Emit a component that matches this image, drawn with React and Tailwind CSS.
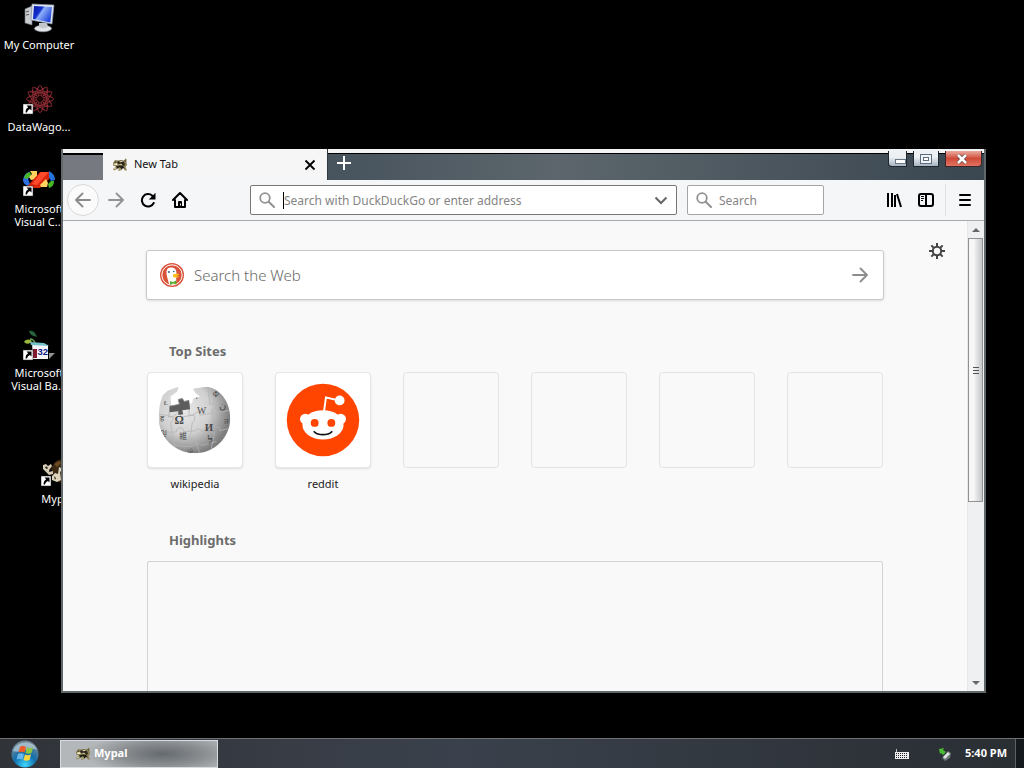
import React from "react";

function ShortcutArrow() {
  return (
    <g>
      <rect x="0" y="20" width="10" height="10" fill="#fff" stroke="#222" strokeWidth=".5" />
      <path d="M3.500 21.500h5v5l-1.600-1.600c-1.800.8-2.600 1.800-2.900 3.600H2.600c-.1-2.600.8-4.100 2.600-5.300z" fill="#000" />
    </g>
  );
}

function ComputerIcon() {
  return (
    <svg viewBox="0 0 32 32" className="size-8" aria-hidden="true">
      <defs>
        <linearGradient id="screen" x1="0" y1="0" x2="1" y2=".6">
          <stop offset="0" stopColor="#0719a5" />
          <stop offset=".4" stopColor="#1230cf" />
          <stop offset=".5" stopColor="#8fb0fa" />
          <stop offset="1" stopColor="#2347dc" />
        </linearGradient>
      </defs>
      <path d="M2 7l7-3v19l-7-2z" fill="#c9cccf" stroke="#72767c" strokeWidth=".6" />
      <path d="M3 10l3-1M3 13l3-.5" stroke="#555" />
      <path d="M16 22l8 1v5h-8z" fill="#aab0b8" />
      <ellipse cx="20" cy="26.500" rx="8.500" ry="3.300" fill="#e1e4e8" stroke="#8e949c" strokeWidth=".6" />
      <path d="M16 21h8l1 4c-3 1.500-7 1.500-9 0z" fill="#c3c7cc" />
      <path d="M9 2l22 1-2 19-21-4z" fill="#dfe5ee" stroke="#8291a8" strokeWidth=".7" />
      <path d="M11 4l18 1-1.700 15.500L10 17z" fill="url(#screen)" />
    </svg>
  );
}

function DataWagonIcon() {
  const angles = [0, 30, 60, 90, 120, 150, 180, 210, 240, 270, 300, 330];
  return (
    <svg viewBox="0 0 32 32" className="size-8" aria-hidden="true">
      <g fill="none" stroke="#a9353d" strokeWidth=".8">
        {angles.map((a) => (
          <g key={a} transform={`rotate(${a} 17 15)`}>
            <path d="M17 12l-4-5 4-6 4 6z" opacity=".75" />
            <path d="M12 3l5 6 5-6M14 10l3-4 3 4" opacity=".6" />
          </g>
        ))}
      </g>
      <circle cx="17" cy="15" r="2.500" fill="#1c0505" />
      <ShortcutArrow />
    </svg>
  );
}

function VisualCIcon() {
  return (
    <svg viewBox="0 0 32 32" className="size-8" aria-hidden="true">
      <path d="M0 14c1-5 3-7 6-8l2 4-3 3 2 5-2 2c-3-1-5-3-5-6z" fill="#2c6fe0" />
      <path d="M1 12c1-4 3-5 6-6l1 3-4 4z" fill="#47b725" />
      <path d="M7 5h7v8l-6 1-2-3 3-3z" fill="#ffd35e" />
      <path d="M2 23L17 6h9l2 2-1 4-10 10H9z" fill="#d9260c" />
      <path d="M9 18L18 6h8l-12 13z" fill="#fc4a2a" />
      <path d="M17 19l6-6 2 4-1 4h-6z" fill="#ffd35e" />
      <path d="M26 5c4 2 6 5 6 9l-4 1-2-4z" fill="#2574de" />
      <path d="M28 15h3c0 4-2 6-5 7l-1-4z" fill="#47b725" />
      <ShortcutArrow />
    </svg>
  );
}

function VisualBasicIcon() {
  return (
    <svg viewBox="0 0 32 32" className="size-8" aria-hidden="true">
      <path d="M6 1c4-1 6 1 8 6-4-1-7-2-8-6z" fill="#26633a" />
      <path d="M1 12c2-3 5-3 8-1-2 3-5 4-8 1z" fill="#9cb93e" />
      <path d="M7 9c3 0 4 1 5 4" stroke="#64a353" strokeWidth="1.500" fill="none" />
      <path d="M9 13l16 2v14H10z" fill="#f5f5fb" />
      <path d="M7 12l14 1 5 3-18-1z" fill="#73c2ca" />
      <path d="M26 23h6l-6 6z" fill="#929292" />
      <path d="M10 19h4v9h-4z" fill="#831830" />
      <text x="14.500" y="25" fontSize="9.500" fontFamily="Liberation Sans, sans-serif" fontWeight="700" fill="#111a87">32</text>
      <ShortcutArrow />
    </svg>
  );
}

function RaccoonFace({ className }) {
  return (
    <svg viewBox="0 0 16 16" className={className} aria-hidden="true">
      <path d="M1 6l2-3 3 .5L9 3l3 .5L13.500 1.500l1 .5v3.500l.5 2.500-1.500 2 1.500 3.500h-2L11 11l-1.500 2-2.500 1-1-1 1.500-2L4 12.500l-2 1L1 12l3-2.500L1 8.500z" fill="#8b8055" />
      <path d="M5 5c2-1.800 5-1.800 7 0l1 3-2 1-1.500-2.500L6 7z" fill="#2b271b" />
      <path d="M3 4.500l1.500.7L2.500 6zM4 9.500l4-1 3 .5 2 2.500-2-.8-1.500 1.800L8 10l-3 1.500zM12.500 3.500l1-.5v2z" fill="#1e1b13" />
      <path d="M1.500 7l3-1L6 7.500 3 8.300zM7 4.500l3-.5 1 .8-3 .4zM7 8l2-.8 1.500.8z" fill="#f6edc8" />
      <path d="M2 11.500l2-1.300.5.8-2 1.500zM7 13l1.500-1.500.5.500-1.300 1.300z" fill="#e0d7ab" />
    </svg>
  );
}

function MypalIcon() {
  return (
    <svg viewBox="0 0 32 32" className="size-8" aria-hidden="true">
      <path d="M10 12l5-7 6-2 7 3 3 8-1 10-8 4-7-4z" fill="#3a2812" />
      <path d="M13 8l5-3 2 2-4 4z" fill="#6b4b20" />
      <path d="M2 9l3-1 2 2 3-2 1 2-2 3-1 3 4-1v3l-4 1-4-4-2-2z" fill="#d6ccb5" />
      <path d="M4 11l2-.5 1 2-2 .3zM8 14l2-2 1 1-2 2z" fill="#211a12" />
      <path d="M11 24v-4l3-3 3 1 1-7 4 2-3 3 1 8-4 2z" fill="#ddd3bc" />
      <path d="M13 20l2 2-1 2z" fill="#2b2013" />
      <ShortcutArrow />
    </svg>
  );
}

function DesktopIcon({ className, icon, children }) {
  return (
    <button type="button" className={`absolute flex w-[78px] flex-col items-center text-white ${className}`}>
      {icon}
      <span className="mt-1 text-[11px] leading-[13px] whitespace-nowrap">{children}</span>
    </button>
  );
}

function SearchIcon({ className }) {
  return (
    <svg viewBox="0 0 16 16" className={className} fill="none" stroke="currentColor" aria-hidden="true">
      <circle cx="6" cy="6" r="4.800" strokeWidth="1.800" />
      <path d="M9.700 9.700l5.300 5.300" strokeWidth="2" strokeLinecap="round" />
    </svg>
  );
}

function Arrow({ className, right }) {
  return (
    <svg viewBox="0 0 16 16" className={className} fill="none" stroke="currentColor" strokeWidth="1.800" strokeLinecap="round" strokeLinejoin="round" aria-hidden="true">
      {right ? <path d="M1 8h14M8.500 1.500L15 8l-6.500 6.500" /> : <path d="M15 8H1M7.500 1.500L1 8l6.500 6.500" />}
    </svg>
  );
}

function TitleBar() {
  return (
    <header className="flex h-[31px] shrink-0 border-t-4 border-[#f1f3f5] bg-[#424e58]">
      <div className="w-10 shrink-0 border-t-2 border-black bg-[#777980]" />
      <div className="-mt-1 flex w-[225px] shrink-0 items-center border-r border-[#303a42] bg-[#f6f6f7] pr-2.5 pl-[9px]">
        <RaccoonFace className="size-4" />
        <span className="ml-1.5 flex-1 text-[11px] text-[#111]">New Tab</span>
        <button type="button" aria-label="Close tab" className="text-black">
          <svg viewBox="0 0 14 14" className="size-3.5" stroke="currentColor" strokeWidth="1.800"><path d="M2.500 2.500l9 9M11.500 2.500l-9 9" /></svg>
        </button>
      </div>
      <div className="flex min-w-0 flex-1 items-start justify-between border-t border-black bg-linear-to-r from-[#47535d] via-[#5c666c] via-35% to-[#3a4650]">
        <button type="button" aria-label="New tab" className="ml-2 mt-px text-white">
          <svg viewBox="0 0 16 16" className="size-4" stroke="currentColor" strokeWidth="2"><path d="M8 1v14M1 8h14" /></svg>
        </button>
        <div className="-mt-[3px] mr-0.5 flex gap-1.5">
          <button type="button" aria-label="Minimize" className="flex h-4 w-[19px] items-end justify-end rounded-bl border border-t-0 border-[#20282f] bg-linear-to-b from-[#eef1f3] from-40% to-[#a5b4c2] pb-0.5">
            <span className="h-[5px] w-[11px] border border-[#6b7986] bg-white" />
          </button>
          <button type="button" aria-label="Maximize" className="flex h-4 w-[26px] items-center justify-center border border-t-0 border-[#20282f] bg-linear-to-b from-[#eef1f3] from-40% to-[#a5b4c2]">
            <span className="flex h-2.5 w-3 items-center justify-center border border-[#5e6c7c] bg-[#eff4f8]"><span className="h-1 w-1.5 border border-[#5e6c7c] bg-white" /></span>
          </button>
          <button type="button" aria-label="Close" className="flex h-4 w-[37px] items-center justify-center rounded-br border border-t-0 border-[#38262a] bg-linear-to-b from-[#e9aaa0] via-[#cf4b38] via-50% to-[#e17260] pr-1">
            <svg viewBox="0 0 12 10" className="h-2.5 w-3" fill="none"><path d="M2 1l8 8M10 1L2 9" stroke="#644445" strokeWidth="4" /><path d="M2 1l8 8M10 1L2 9" stroke="#fff" strokeWidth="2.500" /></svg>
          </button>
        </div>
      </div>
    </header>
  );
}

function Toolbar() {
  return (
    <div className="flex h-[41px] shrink-0 items-center border-b border-[#aaa] bg-[#f5f6f7] px-1 text-black">
      <button type="button" aria-label="Back" className="flex size-8 shrink-0 items-center justify-center rounded-full border border-[#d9d9d9] bg-[#fbfbfb] text-[#8a8a8a]"><Arrow className="size-4" /></button>
      <button type="button" aria-label="Forward" className="ml-[9px] text-[#929292]"><Arrow right className="size-4" /></button>
      <button type="button" aria-label="Reload" className="ml-4">
        <svg viewBox="0 0 16 16" className="size-4" fill="none" stroke="currentColor" strokeWidth="2"><path d="M12.300 3.700A6.200 6.200 0 1 0 13.700 11" strokeLinecap="round" /><path d="M15.500.8v6.700H8.800z" fill="currentColor" stroke="none" /></svg>
      </button>
      <button type="button" aria-label="Home" className="ml-4">
        <svg viewBox="0 0 16 16" className="size-4" fill="none" stroke="currentColor" strokeWidth="2" strokeLinejoin="round" strokeLinecap="round"><path d="M1 8l7-7 7 7M3 8v7h10V8" /><path d="M6 15v-5a1 1 0 0 1 1-1h2a1 1 0 0 1 1 1v5z" fill="currentColor" stroke="none" /><path d="M8.500 12v1" stroke="#f5f6f7" strokeWidth="1" /></svg>
      </button>
      <div className="ml-[62px] flex h-[30px] min-w-0 flex-1 items-center rounded-xs border border-[#777] bg-white px-2">
        <SearchIcon className="size-4 shrink-0 text-[#929292]" />
        <span className="ml-2 h-[17px] w-px shrink-0 bg-black" />
        <input aria-label="Search with DuckDuckGo or enter address" placeholder="Search with DuckDuckGo or enter address" className="min-w-0 flex-1 bg-transparent pt-0.5 text-xs text-black outline-none placeholder:text-[#858585]" />
        <button type="button" aria-label="Show history" className="text-[#666]"><svg viewBox="0 0 14 14" className="size-3.5" fill="none" stroke="currentColor" strokeWidth="2"><path d="M1.500 4.500L7 10l5.500-5.500" /></svg></button>
      </div>
      <div className="ml-2.5 flex h-[30px] w-[137px] shrink-0 items-center rounded-xs border border-[#a5a5a5] bg-white px-2">
        <SearchIcon className="size-4 shrink-0 text-[#929292]" />
        <input aria-label="Search" placeholder="Search" className="ml-[7px] min-w-0 flex-1 bg-transparent pt-0.5 text-xs text-black outline-none placeholder:text-[#858585]" />
      </div>
      <button type="button" aria-label="Library" className="ml-[62px]"><svg viewBox="0 0 16 16" className="size-4" fill="none" stroke="currentColor" strokeWidth="2"><path d="M2 1v14M6 1v14M9 3v12" /><path d="M11 2l4 13" /></svg></button>
      <button type="button" aria-label="Sidebars" className="ml-4"><svg viewBox="0 0 16 16" className="size-4" fill="none" stroke="currentColor" strokeWidth="2"><rect x="1" y="2" width="14" height="12" rx="2" /><path d="M8 2v12" /><path d="M3 4.500h3M3 6.500h3M3 8.500h2" strokeWidth="1" /></svg></button>
      <span className="ml-[11px] h-8 w-px bg-[#e0e0e0]" />
      <button type="button" aria-label="Open menu" className="ml-[11px] mr-[7px]"><svg viewBox="0 0 16 16" className="size-4" stroke="currentColor" strokeWidth="2" strokeLinecap="round"><path d="M3 3h10M3 8h10M3 13h10" /></svg></button>
    </div>
  );
}

function DuckIcon() {
  return (
    <svg viewBox="0 0 24 24" className="size-6 shrink-0" aria-hidden="true">
      <circle cx="12" cy="12" r="12" fill="#d95339" />
      <circle cx="12" cy="12" r="10.200" fill="none" stroke="#fff" strokeWidth="1" />
      <path d="M9 21C8 16 6 12 6.500 8c.5-3 3-4 5.500-3.500 3.500.3 4.500 3 4.500 6l-.5 10.500c-2 1-5 1-7 0z" fill="#fff" />
      <path d="M13 11.500c2-1 4-.6 6.500-.3-1 1-3 1.500-4 1.800 1.500.3 3 0 4 .4-1.500 1.300-4 1.600-6.500.6z" fill="#fdbf18" />
      <path d="M10 18l3 1 3-1.500.5 4L13 20.500 10 22z" fill="#5aaf34" />
      <circle cx="9" cy="9" r=".9" fill="#294d78" /><circle cx="13.800" cy="8.500" r=".8" fill="#294d78" />
    </svg>
  );
}

function WikipediaGlobe() {
  return (
    <svg viewBox="0 0 96 96" className="size-full" aria-label="Wikipedia" role="img">
      <defs>
        <radialGradient id="globe" cx=".36" cy=".38" r=".62"><stop offset="0" stopColor="#e9e9e9" /><stop offset=".55" stopColor="#d0d0d0" /><stop offset="1" stopColor="#7d7d7d" /></radialGradient>
        <clipPath id="ball"><path d="M15 23l5-5 11-4-1 5-7 5 0 9 22-2 1-5 7-2-5-4-2-4 13-2c15 1 25 16 25 32 0 20-16 36-36 36S11 66 11 46c0-9 1-16 4-23z" /></clipPath>
      </defs>
      <g clipPath="url(#ball)">
        <rect x="10" y="8" width="76" height="76" fill="url(#globe)" />
        <g fill="none" stroke="#b5b5b5" strokeWidth=".8">
          <path d="M24 24l-3 21c5-2 7 4 2 5l5 30M42 36v8c6-4 8 3 3 7l-1 10c-4 5 1 9 4 6l5 16M61 12l2 20c7-3 8 4 2 6l2 16c-6 2-5 8 1 7l-4 20" />
          <path d="M10 43c9-2 12 3 17 1 2-5 8-3 6 1l14-2c1-4 6-4 6 0l13-2 19-3M11 60c11 0 12 1 18 0 0-5 7-6 8 0l11-1c3-3 6-2 7 1l12-2c4-4 8-2 6 1l12-3M24 73c8 2 14 3 23 1 4-3 6-1 8 0l15-4" />
        </g>
        <g fill="#4b4b4b" fontFamily="Liberation Serif, serif">
          <text x="27" y="52" fontSize="12" fontWeight="700">Ω</text><text x="50" y="42" fontSize="10">W</text><text x="58" y="59" fontSize="11" fontWeight="700">И</text><text x="32" y="67" fontSize="8" fontFamily="Noto Sans CJK JP, sans-serif">維</text><text x="61" y="73" fontSize="11" fontWeight="700">ל</text><text x="72" y="37" fontSize="10">ن</text><text x="12" y="49" fontSize="8">ह</text><text x="12" y="63" fontSize="8">ญ</text><text x="16" y="33" fontSize="7">Ł</text><text x="46" y="27" fontSize="8">ባ</text><text x="66" y="25" fontSize="8">Ф</text><text x="40" y="81" fontSize="8">ழ</text><text x="78" y="52" fontSize="8">त</text>
        </g>
      </g>
      <path d="M22 34l10-2-1-5 4-1 2 3 5-1 1 9-8 1 1 4-5 1v-4l-9 1z" fill="#5d5d5d" />
      <path d="M22 34l10-2-1-5 4-1 2 3 5-1" fill="none" stroke="#898989" />
    </svg>
  );
}

function RedditIcon() {
  return (
    <svg viewBox="0 0 96 96" className="size-full" aria-label="Reddit" role="img">
      <circle cx="48" cy="48" r="37" fill="#ff4500" />
      <path d="M49 40l2-15 13 3" stroke="#fff" strokeWidth="2" fill="none" />
      <circle cx="65" cy="28" r="5" fill="#fff" /><circle cx="30" cy="47" r="5.500" fill="#fff" /><circle cx="66" cy="47" r="5.500" fill="#fff" />
      <ellipse cx="48" cy="53" rx="21" ry="15" fill="#fff" />
      <circle cx="39.500" cy="51" r="4" fill="#ff4500" /><circle cx="56.500" cy="51" r="4" fill="#ff4500" />
      <path d="M39 60c4 4 14 4 18 0" fill="none" stroke="#111" strokeWidth="1.800" strokeLinecap="round" />
    </svg>
  );
}

function GearIcon() {
  const teeth = [0, 45, 90, 135, 180, 225, 270, 315];
  return (
    <svg viewBox="0 0 16 16" className="size-4" fill="none" stroke="currentColor" aria-hidden="true">
      <circle cx="8" cy="8" r="4.200" strokeWidth="2" />
      {teeth.map((a) => <path key={a} d="M8 0v4" strokeWidth="2" transform={`rotate(${a} 8 8)`} />)}
    </svg>
  );
}

const sites = [
  { name: "wikipedia", logo: <WikipediaGlobe /> },
  { name: "reddit", logo: <RedditIcon /> },
];
const emptySlots = [1, 2, 3, 4];

function NewTabPage() {
  return (
    <div className="flex min-h-0 flex-1 bg-[#f9f9f9]">
      <main className="relative min-w-0 flex-1 overflow-hidden pt-[29px]">
        <button type="button" aria-label="Customize page" className="absolute top-[22px] right-[22px] text-[#444]"><GearIcon /></button>
        <div className="mx-auto w-[738px] max-w-full">
          <form className="flex h-[50px] items-center rounded-[3px] border border-[#c9c9c9] bg-white px-[13px] shadow-sm">
            <DuckIcon />
            <input aria-label="Search the Web" placeholder="Search the Web" className="ml-2.5 min-w-0 flex-1 bg-transparent text-[15px] font-light outline-none placeholder:text-[#686868]" />
            <button type="button" aria-label="Search" className="mr-0.5 text-[#8d8d8d]"><Arrow right className="size-4" /></button>
          </form>
          <section className="mt-[41px] px-px">
            <h2 className="pl-[22px] text-[13px] leading-5 font-bold text-[#6c6c6c]">Top Sites</h2>
            <ul className="mt-[11px] flex gap-8">
              {sites.map((site) => (
                <li key={site.name}>
                  <a href={`#${site.name}`} className="flex w-24 flex-col items-center text-[11px] text-[#222]">
                    <span className="size-24 overflow-hidden rounded-[4px] border border-[#e7e7e7] bg-white shadow-[0_1px_2px_#ddd]">{site.logo}</span>
                    <span className="mt-2 leading-4">{site.name}</span>
                  </a>
                </li>
              ))}
              {emptySlots.map((slot) => <li key={slot} className="size-24 rounded-[4px] border border-[#e4e4e4]" />)}
            </ul>
          </section>
          <section className="mt-[38px] px-px">
            <h2 className="pl-[22px] text-[13px] leading-5 font-bold text-[#6c6c6c]">Highlights</h2>
            <div className="mt-[11px] h-60 rounded-xs border border-[#d3d3d3]" />
          </section>
        </div>
      </main>
      <div className="flex w-[17px] shrink-0 flex-col border-l border-[#e8e8e8] bg-[#eff0f1] pr-px text-[#666]">
        <button type="button" aria-label="Scroll up" className="flex h-[17px] items-center justify-center"><svg viewBox="0 0 8 4" className="h-1 w-2"><path d="M0 4l4-4 4 4z" fill="currentColor" /></svg></button>
        <div className="flex h-[264px] flex-col items-center justify-center gap-0.5 border border-[#929292] bg-linear-to-r from-[#f7f7f7] from-35% to-[#c4c6c8]">
          <span className="h-px w-1.5 bg-[#555]" /><span className="h-px w-1.5 bg-[#555]" /><span className="h-px w-1.5 bg-[#555]" />
        </div>
        <button type="button" aria-label="Scroll down" className="mt-auto flex h-[17px] items-center justify-center"><svg viewBox="0 0 8 4" className="h-1 w-2"><path d="M0 0l4 4 4-4z" fill="currentColor" /></svg></button>
      </div>
    </div>
  );
}

function StartOrb() {
  return (
    <svg viewBox="0 0 28 28" className="size-7" aria-hidden="true">
      <defs><radialGradient id="orb" cx=".5" cy=".9" r=".8"><stop offset="0" stopColor="#40d7ff" /><stop offset=".5" stopColor="#126eab" /><stop offset="1" stopColor="#6d8796" /></radialGradient></defs>
      <circle cx="14" cy="14" r="13.500" fill="url(#orb)" />
      <path d="M2 11C5 1 22-1 26 10c-7-4-17 4-24 1z" fill="#d7e5ed" opacity=".55" />
      <path d="M9 7c2-1.500 4-1 6 0l-1.500 5.500c-2-1-4-1-6 0z" fill="#f05a24" />
      <path d="M16 7.500c2 1 4 1 6-.3L20.500 13c-2 1-4 1-6 0z" fill="#8cc63f" />
      <path d="M7 14c2-1.200 4-1 6 0l-1.500 5.500c-2-1-4-1-6 0z" fill="#69b7ed" />
      <path d="M14 14.500c2 1 4 1 6-.3l-1.500 5.800c-2 1-4 1-6 0z" fill="#ffd53e" />
    </svg>
  );
}

function Taskbar() {
  return (
    <footer className="flex h-[30px] shrink-0 items-center border-t border-[#6f7173] bg-linear-to-r from-[#303439] via-[#3b414c] via-45% to-[#292e33] text-white">
      <button type="button" aria-label="Start" className="ml-[11px] flex"><StartOrb /></button>
      <button type="button" className="ml-[21px] flex h-[28px] w-[158px] items-center border border-[#d9dcde] bg-radial-[ellipse_50%_80%_at_65%_50%] from-[#656a6f] via-[#8b8f92] via-55% to-[#b4b7b9] pl-[14px] text-left">
        <RaccoonFace className="size-4" /><span className="ml-[3px] text-[11px] font-bold">Mypal</span>
      </button>
      <div className="ml-auto flex h-full items-center">
        <svg viewBox="0 0 14 10" className="h-2.5 w-3.5" aria-label="Keyboard" role="img"><path d="M1.500 3V0" stroke="#bbb" /><rect y="3" width="14" height="7" fill="#eee" /><path d="M1 4.500h12M1 6.500h12M1 8.500h12" stroke="#222" strokeDasharray="1 1" /></svg>
        <svg viewBox="0 0 16 16" className="ml-7 size-4" aria-label="Safely remove hardware" role="img"><path d="M5 12l6-7 3 2-1 5-5 3z" fill="#697474" /><path d="M6 11l5-5 2 2-5 5z" fill="#dce1df" /><path d="M2 3l5-1-1 2 3 2-3 3-2-2-1 1z" fill="#4bbd30" /></svg>
        <time className="ml-3 text-[11px] font-bold">5:40 PM</time>
        <button type="button" aria-label="Show desktop" className="ml-2 h-full w-[9px] border-l border-[#5c6062] bg-[#13191d]" />
      </div>
    </footer>
  );
}

export default function App() {
  return (
    <div className="flex h-screen flex-col overflow-hidden bg-black font-['Noto_Sans',sans-serif]">
      <div className="relative min-h-0 flex-1">
        <DesktopIcon className="top-0.5 left-0" icon={<ComputerIcon />}>My Computer</DesktopIcon>
        <DesktopIcon className="top-[84px] left-0" icon={<DataWagonIcon />}>DataWago...</DesktopIcon>
        <DesktopIcon className="top-[166px] left-0" icon={<VisualCIcon />}>Microsoft<br />Visual C...</DesktopIcon>
        <DesktopIcon className="top-[330px] left-0" icon={<VisualBasicIcon />}>Microsoft<br />Visual Ba...</DesktopIcon>
        <DesktopIcon className="top-[456px] left-[18px]" icon={<MypalIcon />}>Mypal</DesktopIcon>
        <div className="absolute inset-[149px_38px_45px_61px] flex flex-col border-2 border-t-0 border-[#62676a] bg-[#f9f9f9]">
          <TitleBar />
          <Toolbar />
          <NewTabPage />
        </div>
      </div>
      <Taskbar />
    </div>
  );
}
